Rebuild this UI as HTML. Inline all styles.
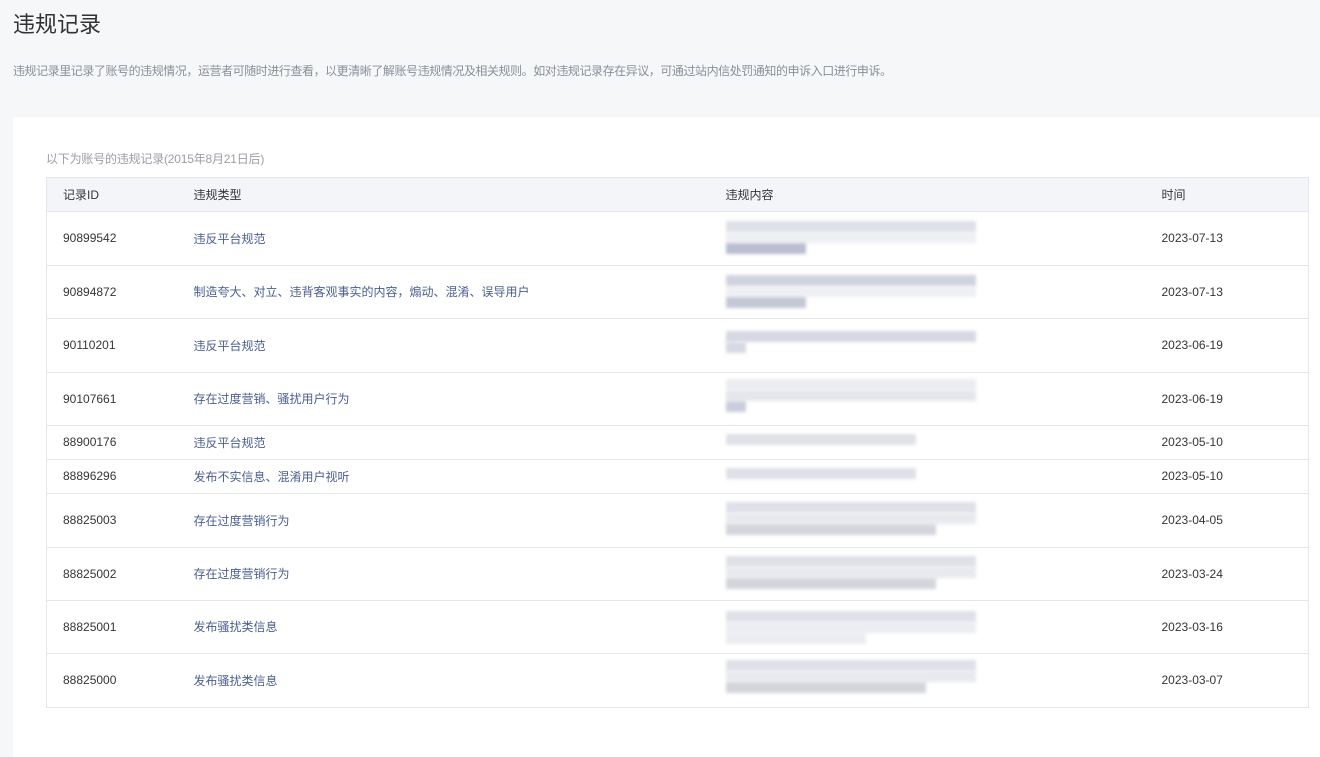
<!DOCTYPE html>
<html><head><meta charset="utf-8"><style>
*{margin:0;padding:0;box-sizing:border-box}
body{width:1320px;height:755px;background:#f6f7f9;font-family:"Liberation Sans","Noto Sans CJK SC",sans-serif;position:relative;overflow:hidden}
h1{position:absolute;left:13px;top:7px;font-size:22px;font-weight:normal;color:#333}
.desc{position:absolute;left:13px;top:62px;font-size:12px;color:#8a8f99;letter-spacing:-0.44px}
.card{position:absolute;left:13px;top:117px;width:1307px;height:640px;background:#fff}
.cap{position:absolute;left:46px;top:150px;font-size:12px;color:#9a9ea6;letter-spacing:-0.2px}
table{position:absolute;left:46px;top:177px;width:1263px;border-collapse:collapse;font-size:12px;color:#353535}
th{background:#f4f5f8;font-weight:normal;text-align:left;height:34px;border:1px solid #e4e6eb;border-left:none;border-right:none;padding-bottom:1px}
td{border-bottom:1px solid #e4e6eb;position:relative;padding-bottom:1px}
tr>*:first-child{padding-left:16px;border-left:1px solid #e4e6eb}
tr>*:last-child{border-right:1px solid #e4e6eb}
td.t{color:#4a5f8e}
.b{position:absolute;left:0;height:11px;background:#dfe1e8;filter:blur(1.5px)}
</style></head><body>
<h1>违规记录</h1>
<div class="desc">违规记录里记录了账号的违规情况，运营者可随时进行查看，以更清晰了解账号违规情况及相关规则。如对违规记录存在异议，可通过站内信处罚通知的申诉入口进行申诉。</div>
<div class="card"></div>
<div class="cap">以下为账号的违规记录(2015年8月21日后)</div>
<table>
<tr><th style="width:147px">记录ID</th><th style="width:532px">违规类型</th><th style="width:436px">违规内容</th><th>时间</th></tr>
<tr style="height:54px"><td>90899542</td><td class="t">违反平台规范</td><td><div class="b" style="top:9px;width:250px"></div><div class="b" style="top:20px;width:250px;opacity:.5"></div><div class="b" style="top:31px;width:80px;background:#b9bfd0"></div></td><td>2023-07-13</td></tr>
<tr style="height:53px"><td>90894872</td><td class="t">制造夸大、对立、违背客观事实的内容，煽动、混淆、误导用户</td><td><div class="b" style="top:9px;width:250px;background:#cfd3de"></div><div class="b" style="top:20px;width:250px;opacity:.5"></div><div class="b" style="top:31px;width:80px;background:#c3c8d6"></div></td><td>2023-07-13</td></tr>
<tr style="height:54px"><td>90110201</td><td class="t">违反平台规范</td><td><div class="b" style="top:12px;width:250px;background:#d5d9e3"></div><div class="b" style="top:23px;width:20px;background:#d5d9e3"></div></td><td>2023-06-19</td></tr>
<tr style="height:53px"><td>90107661</td><td class="t">存在过度营销、骚扰用户行为</td><td><div class="b" style="top:6px;width:250px;opacity:.6"></div><div class="b" style="top:17px;width:250px;opacity:.8"></div><div class="b" style="top:28px;width:20px;background:#c9cedb"></div></td><td>2023-06-19</td></tr>
<tr style="height:34px"><td>88900176</td><td class="t">违反平台规范</td><td><div class="b" style="top:8px;width:190px"></div></td><td>2023-05-10</td></tr>
<tr style="height:34px"><td>88896296</td><td class="t">发布不实信息、混淆用户视听</td><td><div class="b" style="top:8px;width:190px"></div></td><td>2023-05-10</td></tr>
<tr style="height:54px"><td>88825003</td><td class="t">存在过度营销行为</td><td><div class="b" style="top:8px;width:250px"></div><div class="b" style="top:19px;width:250px;opacity:.7"></div><div class="b" style="top:30px;width:210px;background:#d3d5dc"></div></td><td>2023-04-05</td></tr>
<tr style="height:53px"><td>88825002</td><td class="t">存在过度营销行为</td><td><div class="b" style="top:8px;width:250px"></div><div class="b" style="top:19px;width:250px;opacity:.7"></div><div class="b" style="top:30px;width:210px;background:#d3d5dc"></div></td><td>2023-03-24</td></tr>
<tr style="height:53px"><td>88825001</td><td class="t">发布骚扰类信息</td><td><div class="b" style="top:10px;width:250px"></div><div class="b" style="top:21px;width:250px;opacity:.6"></div><div class="b" style="top:32px;width:140px;opacity:.6"></div></td><td>2023-03-16</td></tr>
<tr style="height:54px"><td>88825000</td><td class="t">发布骚扰类信息</td><td><div class="b" style="top:6px;width:250px"></div><div class="b" style="top:17px;width:250px;opacity:.7"></div><div class="b" style="top:28px;width:200px;background:#d3d5dc"></div></td><td>2023-03-07</td></tr>
</table>
</body></html>
